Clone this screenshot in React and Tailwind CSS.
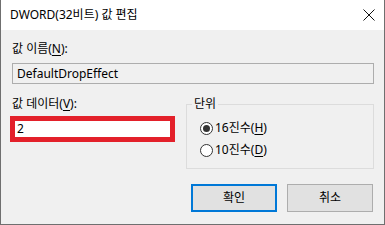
import React from "react";

function Radio({ checked, label, hotkey }) {
	return (
		<div className="flex flex-row items-center h-[16px]">
			<div className="w-[13px] h-[13px] rounded-full border border-[#333333] bg-white flex items-center justify-center">
				{checked && <div className="w-[7px] h-[7px] rounded-full bg-[#333333]"></div>}
			</div>
			<p className="ml-[2px] leading-[16px]">
				{label}(<span className="underline underline-offset-2">{hotkey}</span>)
			</p>
		</div>
	);
}

export default function App() {
	return (
		<div className="w-[385px] h-[225px] flex flex-col bg-[#f0f0f0] border-l border-r border-b border-[#6f6f6f] text-[12px] text-black font-['Noto_Sans','Noto_Sans_CJK_KR',sans-serif]">
			<div className="h-[30px] bg-white flex flex-row items-center justify-between pl-[9px] pr-[9px]">
				<p className="leading-[16px]">DWORD(32비트) 값 편집</p>
				<svg width="12" height="12" viewBox="0 0 12 12">
					<path d="M0.5 0.5 L11.5 11.5 M11.5 0.5 L0.5 11.5" stroke="#111111" strokeWidth="1" fill="none" />
				</svg>
			</div>

			<div className="flex flex-col pl-[11px] pr-[10px] pt-[11px]">
				<p className="leading-[16px]">
					값 이름(<span className="underline underline-offset-2">N</span>):
				</p>
				<div className="mt-[6px] h-[21px] border border-[#adadad] bg-[#f0f0f0] flex items-center pl-[4px]">
					DefaultDropEffect
				</div>

				<div className="flex flex-row mt-[12px]">
					<div className="flex flex-col w-[163px]">
						<p className="leading-[16px]">
							값 데이터(<span className="underline underline-offset-2">V</span>):
						</p>
						<div className="mt-[4px] -ml-[2px] w-[165px] h-[26px] border-[5px] border-[#e3202a] bg-white flex items-center pl-[2px]">
							2
						</div>
					</div>

					<fieldset className="ml-[11px] w-[188px] h-[73px] border border-[#dcdcdc]">
						<legend className="ml-[5px] px-[2px] leading-[16px]">단위</legend>
						<div className="flex flex-col pl-[13px] pt-[8px] gap-[6px]">
							<Radio checked label="16진수" hotkey="H" />
							<Radio label="10진수" hotkey="D" />
						</div>
					</fieldset>
				</div>

				<div className="flex flex-row justify-end gap-[10px] mt-[15px]">
					<button className="w-[86px] h-[28px] bg-[#e1e1e1] border-2 border-[#0078d7] leading-[16px]">
						확인
					</button>
					<button className="w-[86px] h-[28px] bg-[#e1e1e1] border border-[#adadad] leading-[16px] mr-[1px]">
						취소
					</button>
				</div>
			</div>
		</div>
	);
}
